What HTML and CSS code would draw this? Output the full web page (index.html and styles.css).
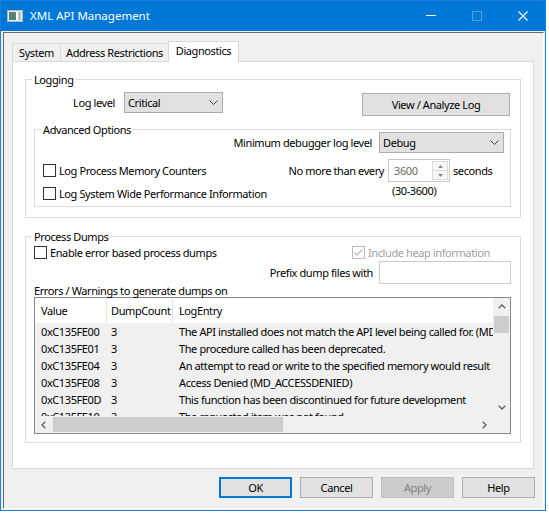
FILE: index.html
```
<!DOCTYPE html>
<html lang="en">
<head>
<meta charset="utf-8">
<title>XML API Management</title>
<link rel="stylesheet" href="styles.css">
</head>
<body>
<div class="window">
  <div class="titlebar">
    <svg class="app-icon" width="16" height="12" viewBox="0 0 16 12">
      <defs>
        <linearGradient id="ig" x1="0" y1="0" x2="0" y2="1">
          <stop offset="0" stop-color="#667f7a"/>
          <stop offset="1" stop-color="#3f8c72"/>
        </linearGradient>
      </defs>
      <rect x="0.5" y="0.5" width="15" height="11" fill="#e9edf0" stroke="#aeb8bf"/>
      <rect x="2" y="2" width="7" height="8" fill="url(#ig)"/>
      <rect x="9" y="2" width="2" height="8" fill="#ffffff"/>
      <rect x="11" y="2" width="3" height="8" fill="#b9c3ca"/>
    </svg>
    <span class="title">XML API Management</span>
    <div class="caption">
      <span class="cap"><svg width="10" height="10" viewBox="0 0 10 10"><line x1="0" y1="4.5" x2="10" y2="4.5" stroke="#fff"/></svg></span>
      <span class="cap"><svg width="10" height="10" viewBox="0 0 10 10"><rect x="0.5" y="0.5" width="9" height="9" fill="none" stroke="rgba(255,255,255,0.3)"/></svg></span>
      <span class="cap cap-close"><svg width="10" height="10" viewBox="0 0 10 10"><path d="M0.5 0.5 L9.5 9.5 M9.5 0.5 L0.5 9.5" stroke="#fff" stroke-width="1.1"/></svg></span>
    </div>
  </div>

  <div class="client">
    <div class="tabs">
      <div class="tab tab-system">System</div>
      <div class="tab tab-address">Address Restrictions</div>
      <div class="tab tab-diag">Diagnostics</div>
    </div>

    <div class="panel">
      <div class="group logging">
        <div class="legend">Logging</div>
        <div class="row log-row">
          <span class="lbl lbl-loglevel">Log level</span>
          <div class="combo combo-log">
            <span class="combo-text">Critical</span>
            <svg width="9" height="5" viewBox="0 0 9 5"><polyline points="0.5,0.5 4.5,4.5 8.5,0.5" fill="none" stroke="#404040"/></svg>
          </div>
          <button type="button" class="btn btn-view">View / Analyze Log</button>
        </div>

        <div class="group adv">
          <div class="legend">Advanced Options</div>
          <div class="row adv-top">
            <span class="lbl">Minimum debugger log level</span>
            <div class="combo combo-debug">
              <span class="combo-text">Debug</span>
              <svg width="9" height="5" viewBox="0 0 9 5"><polyline points="0.5,0.5 4.5,4.5 8.5,0.5" fill="none" stroke="#404040"/></svg>
            </div>
          </div>
          <div class="adv-body">
            <div class="adv-checks">
              <div class="check"><span class="cb"></span><span>Log Process Memory Counters</span></div>
              <div class="check"><span class="cb"></span><span>Log System Wide Performance Information</span></div>
            </div>
            <div class="spin-grid">
              <span class="spin-label">No more than every</span>
              <div class="spin">
                <span class="spin-value">3600</span>
                <div class="spin-btns">
                  <span class="spin-btn"><svg width="5" height="3" viewBox="0 0 5 3"><polygon points="0,3 2.5,0 5,3" fill="#8a8a8a"/></svg></span>
                  <span class="spin-btn"><svg width="5" height="3" viewBox="0 0 5 3"><polygon points="0,0 5,0 2.5,3" fill="#8a8a8a"/></svg></span>
                </div>
              </div>
              <span class="seconds">seconds</span>
              <span class="range">(30-3600)</span>
            </div>
          </div>
        </div>
      </div>

      <div class="group dumps">
        <div class="legend">Process Dumps</div>
        <div class="dump-checks">
          <div class="check check-enable"><span class="cb"></span><span>Enable error based process dumps</span></div>
          <div class="check check-disabled">
            <span class="cb cb-disabled"><svg width="11" height="11" viewBox="0 0 11 11"><polyline points="1.5,5.5 4,8 9.5,2.5" fill="none" stroke="#b5b5b5" stroke-width="1.2"/></svg></span>
            <span>Include heap information</span>
          </div>
        </div>
        <div class="row prefix-row">
          <span class="lbl lbl-prefix">Prefix dump files with</span>
          <div class="textbox"></div>
        </div>
        <div class="errors-lbl">Errors / Warnings to generate dumps on</div>
        <div class="list">
          <div class="list-main">
            <div class="lv-head">
              <span class="c c1">Value</span>
              <span class="c c2">DumpCount</span>
              <span class="c c3">LogEntry</span>
            </div>
            <div class="lv-row"><span class="c c1">0xC135FE00</span><span class="c c2">3</span><span class="c c3">The API installed does not match the API level being called for. (MD_APIMISMATCH)</span></div>
            <div class="lv-row"><span class="c c1">0xC135FE01</span><span class="c c2">3</span><span class="c c3">The procedure called has been deprecated.</span></div>
            <div class="lv-row"><span class="c c1">0xC135FE04</span><span class="c c2">3</span><span class="c c3">An attempt to read or write to the specified memory would result in an access violation.</span></div>
            <div class="lv-row"><span class="c c1">0xC135FE08</span><span class="c c2">3</span><span class="c c3">Access Denied (MD_ACCESSDENIED)</span></div>
            <div class="lv-row"><span class="c c1">0xC135FE0D</span><span class="c c2">3</span><span class="c c3">This function has been discontinued for future development</span></div>
            <div class="lv-row"><span class="c c1">0xC135FE10</span><span class="c c2">3</span><span class="c c3">The requested item was not found</span></div>
          </div>
          <div class="vscroll">
            <span class="sb-btn"><svg width="8" height="5" viewBox="0 0 8 5"><polyline points="0.7,4.3 4,1 7.3,4.3" fill="none" stroke="#606060" stroke-width="1.3"/></svg></span>
            <span class="vthumb"></span>
            <span class="sb-btn sb-down"><svg width="8" height="5" viewBox="0 0 8 5"><polyline points="0.7,0.7 4,4 7.3,0.7" fill="none" stroke="#606060" stroke-width="1.3"/></svg></span>
          </div>
          <div class="hscroll">
            <span class="sb-btn"><svg width="5" height="8" viewBox="0 0 5 8"><polyline points="4.3,0.7 1,4 4.3,7.3" fill="none" stroke="#606060" stroke-width="1.3"/></svg></span>
            <span class="hthumb"></span>
            <span class="sb-btn sb-right"><svg width="5" height="8" viewBox="0 0 5 8"><polyline points="0.7,0.7 4,4 0.7,7.3" fill="none" stroke="#606060" stroke-width="1.3"/></svg></span>
          </div>
          <div class="corner"></div>
        </div>
      </div>
    </div>

    <div class="buttons">
      <button type="button" class="btn dlg-btn btn-ok">OK</button>
      <button type="button" class="btn dlg-btn">Cancel</button>
      <button type="button" class="btn dlg-btn btn-apply">Apply</button>
      <button type="button" class="btn dlg-btn">Help</button>
    </div>
  </div>
</div>
</body>
</html>
```

FILE: styles.css
```
* { box-sizing: border-box; }
html, body { margin: 0; padding: 0; background: #fff; }
body { font-family: "Noto Sans", "Open Sans", sans-serif; font-size: 11px; letter-spacing: -0.4px; color: #000; }

.window { width: 546px; height: 511px; border: 1px solid #1a7fd6; background: #f0f0f0; display: flex; flex-direction: column; }

.titlebar { flex: none; height: 30px; background: #0078d7; display: flex; align-items: center; color: #fff; }
.app-icon { margin-left: 6px; flex: none; }
.title { margin-left: 7px; font-size: 11.5px; letter-spacing: 0; line-height: 16px; }
.caption { margin-left: auto; display: flex; height: 30px; }
.cap { display: flex; align-items: center; justify-content: center; width: 46px; height: 30px; }
.cap-close { width: 45px; }

.client { flex: 1; min-height: 0; margin: 1px 1px 1px 2px; border: 1px solid; border-color: #696969 #ffffff #ffffff #696969; padding: 8px 0 0 8px; display: flex; flex-direction: column; }

.tabs { display: flex; align-items: flex-end; height: 20px; flex: none; }
.tab { height: 18px; border: 1px solid #d9d9d9; border-bottom: 0; background: #f0f0f0; text-align: center; line-height: 17px; white-space: nowrap; }
.tab + .tab { margin-left: -1px; }
.tab-system { width: 49px; }
.tab-address { width: 109px; }
.tab-diag { width: 71px; height: 21px; margin-bottom: -1px; background: #fff; position: relative; z-index: 1; line-height: 18px; }

.panel { flex: none; width: 522px; height: 408px; border: 1px solid #d9d9d9; background: #fff; padding: 0 12px; }

.group { border: 1px solid #dcdcdc; }
.legend { width: fit-content; margin: -8px 0 -8px 6px; padding: 0 2px; line-height: 16px; background: #fff; white-space: nowrap; }

.row { display: flex; }
.lbl { line-height: 21px; white-space: nowrap; }

.logging { margin-top: 17px; height: 139px; }
.log-row { margin-top: 12px; height: 24px; align-items: flex-start; }
.lbl-loglevel { width: 89px; text-align: right; margin-right: 9px; flex: none; }

.combo { display: flex; align-items: center; height: 21px; border: 1px solid #adadad; background: #e1e1e1; padding: 0 4px 0 3px; flex: none; }
.combo-text { flex: 1; line-height: 19px; }
.combo-log { width: 99px; }
.combo-debug { width: 125px; }

.btn { display: flex; align-items: center; justify-content: center; border: 1px solid #adadad; background: #e1e1e1; font: inherit; letter-spacing: inherit; color: #000; padding: 0; margin: 0; }
.btn-view { margin-left: auto; margin-right: 10px; margin-top: 1px; width: 148px; height: 23px; }

.adv { margin: 13px 9px 0 8px; height: 78px; }
.adv-top { margin-top: 2px; margin-right: 6px; justify-content: flex-end; align-items: center; gap: 7px; height: 21px; }
.adv-body { display: flex; margin-top: 6px; }
.adv-checks { width: 248px; flex: none; padding-left: 8px; }

.check { display: flex; align-items: center; gap: 3px; height: 23px; white-space: nowrap; }
.cb { width: 13px; height: 13px; border: 1px solid #333; background: #fff; flex: none; display: flex; align-items: center; justify-content: center; }
.cb-disabled { border-color: #bcbcbc; }
.check-disabled { color: #a0a0a0; }

.spin-grid { display: grid; grid-template-columns: 105px 65px auto; grid-template-rows: 23px 18px; }
.spin-label { text-align: right; padding-right: 4px; line-height: 23px; white-space: nowrap; }
.spin { width: 62px; height: 23px; border: 1px solid #c8c8c8; background: #fff; display: flex; }
.spin-value { flex: 1; padding-left: 5px; line-height: 21px; color: #6d6d6d; }
.spin-btns { width: 17px; display: flex; flex-direction: column; padding: 1px 1px 1px 0; }
.spin-btn { flex: 1; border: 1px solid #dcdcdc; background: #f7f7f7; display: flex; align-items: center; justify-content: center; }
.spin-btn + .spin-btn { border-top: 0; }
.seconds { line-height: 23px; white-space: nowrap; }
.range { grid-column: 2 / 4; padding-left: 4px; line-height: 18px; }

.dumps { margin-top: 18px; height: 207px; }
.dump-checks { display: grid; grid-template-columns: 326px auto; margin-top: 5px; height: 21px; }
.dump-checks .check { height: 21px; }
.check-enable { padding-left: 8px; }
.prefix-row { margin-top: -2px; margin-right: 9px; justify-content: flex-end; align-items: center; gap: 6px; height: 23px; }
.lbl-prefix { line-height: 23px; }
.textbox { width: 132px; height: 23px; border: 1px solid #cccccc; background: #fff; }
.errors-lbl { padding-left: 8px; line-height: 13px; white-space: nowrap; }

.list { margin-left: 8px; width: 477px; height: 137px; border: 1px solid #828790; display: grid; grid-template-columns: 458px 17px; grid-template-rows: 118px 17px; }
.list-main { overflow: hidden; background: #f0f0f0; }
.lv-head { display: flex; height: 25px; background: #fff; }
.lv-head .c { line-height: 25px; }
.lv-row { display: flex; height: 17px; line-height: 17px; }
.c { flex: none; white-space: nowrap; }
.c1 { width: 72px; padding-left: 6px; border-right: 1px solid #e5e5e5; }
.c2 { width: 66px; padding-left: 4px; border-right: 1px solid #e5e5e5; }
.c3 { padding-left: 6px; }
.lv-row .c1, .lv-row .c2 { border-right-color: transparent; }

.vscroll { background: #f0f0f0; display: flex; flex-direction: column; }
.sb-btn { flex: none; display: flex; align-items: center; justify-content: center; height: 17px; }
.vthumb { margin: 1px 1px 0; height: 17px; background: #cdcdcd; flex: none; }
.sb-down { margin-top: auto; }
.hscroll { background: #f0f0f0; display: flex; }
.hscroll .sb-btn { width: 17px; height: 17px; }
.hthumb { margin: 1px 0 1px 1px; width: 230px; background: #cdcdcd; flex: none; }
.sb-right { margin-left: auto; }
.corner { background: #f0f0f0; }

.buttons { display: flex; justify-content: flex-end; gap: 8px; margin-top: 8px; padding-right: 8px; }
.dlg-btn { width: 73px; height: 21px; }
.btn-ok { border: 2px solid #0078d7; }
.btn-apply { background: #cccccc; border-color: #bfbfbf; color: #838383; }
```
